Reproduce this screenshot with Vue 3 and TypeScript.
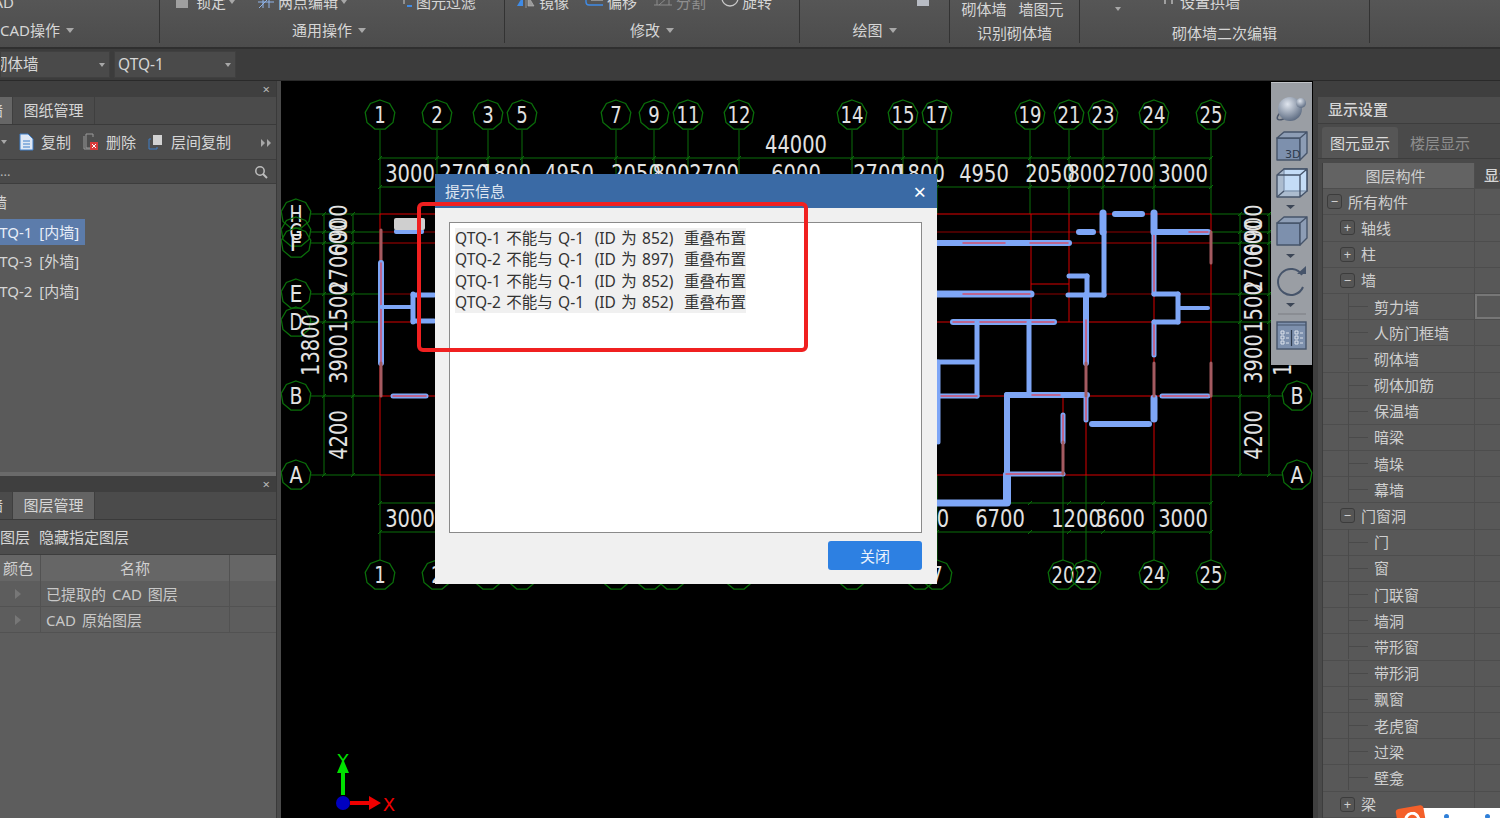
<script setup lang="ts">
interface Wall { p: number[]; w: number; core?: boolean; kind?: string }

const columns: [string, number][] = [
  ['1', 380], ['2', 437], ['3', 488], ['5', 522], ['7', 616], ['9', 654], ['11', 688], ['12', 739],
  ['14', 852], ['15', 903], ['17', 937], ['19', 1030], ['21', 1069], ['23', 1103], ['24', 1154], ['25', 1211],
]
const bottomColumns: [string, number][] = [
  ['1', 380], ['2', 437], ['3', 488], ['5', 522], ['7', 616], ['9', 650], ['11', 672], ['12', 739],
  ['14', 852], ['15', 920], ['7', 937], ['20', 1063], ['22', 1086], ['24', 1154], ['25', 1211],
]
const rows: [string, number, string][] = [
  ['H', 214, '#e00000'], ['G', 232, '#8e0000'], ['F', 243, '#b00000'], ['E', 294, '#8e0000'],
  ['D', 322, '#d80000'], ['B', 396, '#e00000'], ['A', 475, '#d80000'],
]
const topDims: [string, number][] = [
  ['3000', 410], ['2700', 464], ['1800', 506], ['4950', 569], ['2050', 636], ['800', 671], ['2700', 714],
  ['6000', 796], ['2700', 878], ['1800', 920], ['4950', 984], ['2050', 1050], ['800', 1086], ['2700', 1129], ['3000', 1183],
]
const bottomDims: [string, number][] = [
  ['3000', 410], ['6700', 1000], ['1200', 1076], ['3600', 1120], ['3000', 1183], ['0', 943],
]
const sideDims: [string, number][] = [
  ['900', 223], ['600', 238], ['2700', 268], ['1500', 308], ['3900', 359], ['4200', 435],
]
const redLines: number[][] = [
  [380, 214, 380, 475], [1031, 214, 1031, 322], [1069, 214, 1069, 322], [1103, 214, 1103, 294],
  [1086, 322, 1086, 475], [1154, 214, 1154, 475], [1211, 214, 1211, 475], [1063, 396, 1063, 475],
  [1031, 284, 1069, 284],
]
const walls: Wall[] = [
  { p: [937, 243, 1069, 243], w: 6 }, { p: [963, 243, 1005, 243], w: 1.500, kind: 'core' }, { p: [1030, 243, 1068, 243], w: 1.500, kind: 'core' },
  { p: [937, 294, 1031, 294], w: 7 }, { p: [963, 294, 1030, 294], w: 1.500, kind: 'core' },
  { p: [1103, 213, 1103, 232], w: 7 }, { p: [1104, 232, 1104, 295], w: 5 }, { p: [1115, 214, 1142, 214], w: 6 },
  { p: [1079, 232, 1093, 232], w: 6 }, { p: [1154, 213, 1154, 232], w: 7 }, { p: [1154, 232, 1154, 294], w: 5, core: true },
  { p: [1154, 232, 1208, 232], w: 6 }, { p: [1189, 232, 1208, 232], w: 1.500, kind: 'core' },
  { p: [1211, 232, 1211, 263], w: 3, kind: 'old' }, { p: [1069, 276, 1087, 276], w: 5 }, { p: [1087, 276, 1087, 295], w: 5 },
  { p: [1068, 295, 1104, 295], w: 5 }, { p: [1086, 295, 1086, 363], w: 6 }, { p: [1086, 320, 1086, 363], w: 1.500, kind: 'core' },
  { p: [953, 322, 1054, 322], w: 6, core: true },
  { p: [977, 322, 977, 396], w: 5 }, { p: [1029, 322, 1029, 395], w: 5 }, { p: [937, 362, 975, 362], w: 5 },
  { p: [937, 396, 977, 396], w: 5, core: true }, { p: [938, 362, 938, 442], w: 5 }, { p: [1007, 395, 1087, 395], w: 6 },
  { p: [1032, 395, 1060, 395], w: 1.500, kind: 'core' }, { p: [1007, 395, 1007, 475], w: 6 }, { p: [1007, 475, 1007, 502], w: 8 },
  { p: [937, 503, 1007, 503], w: 7 }, { p: [1006, 474, 1063, 474], w: 5, core: true }, { p: [1063, 415, 1063, 442], w: 5, core: true },
  { p: [1063, 442, 1063, 474], w: 3, kind: 'old' }, { p: [1086, 398, 1086, 420], w: 5, core: true }, { p: [1086, 363, 1086, 396], w: 3, kind: 'old' },
  { p: [1092, 424, 1149, 424], w: 6 }, { p: [1154, 398, 1154, 419], w: 7 }, { p: [1154, 363, 1154, 396], w: 3, kind: 'old' },
  { p: [1154, 322, 1154, 355], w: 5, core: true }, { p: [1154, 294, 1178, 294], w: 5 }, { p: [1178, 294, 1178, 322], w: 5 },
  { p: [1154, 322, 1178, 322], w: 5 }, { p: [1178, 308, 1208, 308], w: 4 }, { p: [1162, 396, 1208, 396], w: 5, core: true },
  { p: [1211, 363, 1211, 396], w: 3, kind: 'old' }, { p: [381, 230, 381, 263], w: 3, kind: 'old' }, { p: [381, 263, 381, 363], w: 6, core: true },
  { p: [381, 363, 381, 396], w: 3, kind: 'old' }, { p: [381, 307, 413, 307], w: 4 }, { p: [413, 294, 413, 322], w: 5 },
  { p: [413, 295, 434, 295], w: 5 }, { p: [413, 321, 434, 321], w: 5 }, { p: [393, 396, 426, 396], w: 5, core: true },
]

function bubble(cx: number, cy: number): string {
  const pts: string[] = []
  for (let i = 0; i < 9; i++) {
    const a = -Math.PI / 2 + (i * 2 * Math.PI) / 9
    pts.push(`${(cx + 15 * Math.cos(a)).toFixed(1)},${(cy + 15 * Math.sin(a)).toFixed(1)}`)
  }
  return pts.join(' ')
}
const numWidth = (s: string) => s.length * 12.4

const treeRows: { text: string; level: number; icon?: string; check?: boolean }[] = [
  { text: '所有构件', level: 0, icon: '−' }, { text: '轴线', level: 1, icon: '+' }, { text: '柱', level: 1, icon: '+' },
  { text: '墙', level: 1, icon: '−' }, { text: '剪力墙', level: 2, check: true }, { text: '人防门框墙', level: 2 },
  { text: '砌体墙', level: 2 }, { text: '砌体加筋', level: 2 }, { text: '保温墙', level: 2 }, { text: '暗梁', level: 2 },
  { text: '墙垛', level: 2 }, { text: '幕墙', level: 2 }, { text: '门窗洞', level: 1, icon: '−' }, { text: '门', level: 2 },
  { text: '窗', level: 2 }, { text: '门联窗', level: 2 }, { text: '墙洞', level: 2 }, { text: '带形窗', level: 2 },
  { text: '带形洞', level: 2 }, { text: '飘窗', level: 2 }, { text: '老虎窗', level: 2 }, { text: '过梁', level: 2 },
  { text: '壁龛', level: 2 }, { text: '梁', level: 1, icon: '+' },
]
const messages = [
  'QTQ-1 不能与 Q-1  (ID 为 852)  重叠布置',
  'QTQ-2 不能与 Q-1  (ID 为 897)  重叠布置',
  'QTQ-1 不能与 Q-1  (ID 为 852)  重叠布置',
  'QTQ-2 不能与 Q-1  (ID 为 852)  重叠布置',
]
</script>

<template>
  <div class="app">
    <header class="ribbon">
      <section class="group g-cad">
        <div class="tools"><span class="cut-left">CAD</span></div>
        <div class="label">CAD操作 <i class="caret"></i></div>
      </section>
      <section class="group g-common">
        <div class="tools">
          <span class="t1"><b class="ico-box"></b>锁定 <i class="caret small"></i></span>
          <span class="t2"><svg width="18" height="12" viewBox="0 0 18 12"><path d="M1 6h16M6 0v12M12 0v12M2 12 14 0" stroke="#8fb4ea" fill="none"/></svg>两点编辑 <i class="caret small"></i></span>
          <span class="t3"><svg width="12" height="12" viewBox="0 0 12 12"><path d="M3 0v8" stroke="#ccc"/><path d="M6 9h5v2H6z" fill="#3f8be6"/></svg>图元过滤</span>
        </div>
        <div class="label shift-common">通用操作 <i class="caret"></i></div>
      </section>
      <section class="group g-modify">
        <div class="tools">
          <span class="t4"><svg width="20" height="12" viewBox="0 0 20 12"><path d="M1 10 7 0v10z" fill="#3f8be6"/><path d="M10 0v12M12 0l6 10h-6z" fill="#999" stroke="#bbb" stroke-width=".6"/></svg>镜像</span>
          <span class="t5"><svg width="20" height="12" viewBox="0 0 20 12"><path d="M2 0v6q0 3 3 3h14" fill="none" stroke="#3f8be6" stroke-width="1.4"/><path d="M7 4h12" stroke="#ccc"/></svg>偏移</span>
          <span class="t6 dim"><svg width="20" height="12" viewBox="0 0 20 12"><path d="M1 9h18M4 9V3h12v6M6 9l9-8" fill="none" stroke="#8c8c8c"/></svg>分割</span>
          <span class="t7"><svg width="18" height="12" viewBox="0 0 18 12"><circle cx="9" cy="2" r="8" fill="none" stroke="#c8c8c8" stroke-width="1.3"/></svg>旋转</span>
        </div>
        <div class="label">修改 <i class="caret"></i></div>
      </section>
      <section class="group g-draw">
        <div class="tools"><span class="draw-ico"></span></div>
        <div class="label">绘图 <i class="caret"></i></div>
      </section>
      <section class="group g-identify">
        <div class="tools high"><span>砌体墙</span><span>墙图元</span></div>
        <div class="label low">识别砌体墙</div>
      </section>
      <section class="group g-edit">
        <div class="tools">
          <i class="caret small edit-caret"></i>
          <span class="t8"><svg width="14" height="12" viewBox="0 0 14 12"><path d="M2 0v8M9 0v8" stroke="#b8b8b8" stroke-width="1.5"/></svg>设置拱墙</span>
        </div>
        <div class="label low">砌体墙二次编辑</div>
      </section>
      <section class="group g-rest"></section>
    </header>

    <div class="selectbar">
      <div class="combo c1"><span class="cut-combo">砌体墙</span><i class="caret small"></i></div>
      <div class="combo c2"><span>QTQ-1</span><i class="caret small"></i></div>
    </div>

    <main class="workspace">
      <aside class="left-col">
        <div class="pane pane-top">
          <div class="strip"><span class="close">×</span></div>
          <div class="tabs">
            <span class="tab stub">墙</span>
            <span class="tab">图纸管理</span>
          </div>
          <div class="actions">
            <i class="caret small first"></i>
            <span class="act a1">
              <svg width="15" height="18" viewBox="0 0 15 18"><path d="M1 1h8l5 5v11H1z" fill="#dfe8f5" stroke="#3f7fc8"/><path d="M4 8h7M4 11h7M4 14h7" stroke="#3f7fc8"/></svg>复制
            </span>
            <span class="act a2">
              <svg width="16" height="18" viewBox="0 0 16 18"><path d="M3 1h7v3M3 1v14h4" fill="none" stroke="#9a9a9a"/><path d="M1 3v13h6" fill="none" stroke="#9a9a9a"/><rect x="7" y="9" width="8" height="8" fill="#d93a3a"/><path d="m9 11 4 4m0-4-4 4" stroke="#fff"/></svg>删除
            </span>
            <span class="act a3">
              <svg width="15" height="16" viewBox="0 0 15 16"><rect x="5" y="1" width="9" height="10" fill="#d2d2d2"/><path d="M3 5H1v10h8v-2" fill="none" stroke="#3f7fc8"/></svg>层间复制
            </span>
            <svg class="more" width="10" height="8" viewBox="0 0 10 8"><path d="M0 0l4 4-4 4zM6 0l4 4-4 4z" fill="#a8a8a8"/></svg>
          </div>
          <div class="search">
            <span>...</span>
            <svg width="14" height="14" viewBox="0 0 14 14"><circle cx="6" cy="6" r="4.2" fill="none" stroke="#bdbdbd" stroke-width="1.5"/><path d="m9 9 4 4" stroke="#bdbdbd" stroke-width="2"/></svg>
          </div>
          <ul class="list">
            <li class="head">墙</li>
            <li class="selected">QTQ-1 [内墙]</li>
            <li>QTQ-3 [外墙]</li>
            <li>QTQ-2 [内墙]</li>
          </ul>
        </div>
        <div class="hsplit"></div>
        <div class="pane pane-bottom">
          <div class="strip low-strip"><span class="close">×</span></div>
          <div class="tabs">
            <span class="tab stub dark">墙</span>
            <span class="tab on">图层管理</span>
          </div>
          <div class="actions lay-actions"><span class="lay1">图层</span><span>隐藏指定图层</span></div>
          <div class="grid-row grid-head"><span class="c-color">颜色</span><span class="c-name center">名称</span></div>
          <div class="grid-row"><span class="c-color"><i class="tri"></i></span><span class="c-name">已提取的 CAD 图层</span></div>
          <div class="grid-row"><span class="c-color"><i class="tri"></i></span><span class="c-name">CAD 原始图层</span></div>
        </div>
      </aside>
      <div class="vsplit"></div>

      <div class="canvas">
        <svg class="drawing" width="1032" height="737" viewBox="281 81 1032 737">
          <g stroke="#0a6e0a" fill="none">
            <line v-for="c in columns" :key="'t' + c[1]" :x1="c[1]" y1="130" :x2="c[1]" y2="214" />
            <line v-for="c in bottomColumns" :key="'b' + c[1]" :x1="c[1]" y1="475" :x2="c[1]" y2="560" />
            <line x1="380" y1="158" x2="1212" y2="158" />
            <line x1="380" y1="187" x2="1212" y2="187" />
            <line x1="380" y1="503" x2="1212" y2="503" />
            <line x1="380" y1="532" x2="1212" y2="532" />
            <template v-for="r in rows" :key="'g' + r[0]">
              <line x1="311" :y1="r[1]" x2="380" :y2="r[1]" />
              <line x1="1211" :y1="r[1]" x2="1283" :y2="r[1]" />
            </template>
            <line x1="324" y1="214" x2="324" y2="475" />
            <line x1="353" y1="214" x2="353" y2="475" />
            <line x1="1240" y1="214" x2="1240" y2="475" />
            <line x1="1269" y1="214" x2="1269" y2="475" />
            <template v-for="c in columns" :key="'k' + c[1]">
              <path :d="`M${c[1] - 2} 189l4-4M${c[1] - 2} 160l4-4M${c[1] - 2} 505l4-4M${c[1] - 2} 534l4-4`" />
            </template>
            <template v-for="r in rows" :key="'m' + r[0]">
              <path :d="`M322 ${r[1] + 2}l4-4M351 ${r[1] + 2}l4-4M1238 ${r[1] + 2}l4-4M1267 ${r[1] + 2}l4-4`" />
            </template>
          </g>

          <g fill="none">
            <line v-for="r in rows" :key="'r' + r[0]" x1="380" :y1="r[1]" x2="1211" :y2="r[1]" :stroke="r[2]" />
            <line v-for="(l, i) in redLines" :key="'v' + i" :x1="l[0]" :y1="l[1]" :x2="l[2]" :y2="l[3]" stroke="#d80000" />
          </g>

          <g fill="none" stroke-linecap="round">
            <template v-for="(w, i) in walls" :key="'w' + i">
              <line :x1="w.p[0]" :y1="w.p[1]" :x2="w.p[2]" :y2="w.p[3]" :stroke-width="w.w"
                :stroke="w.kind === 'old' ? '#a45a60' : w.kind === 'core' ? '#d2506e' : '#7ea6f6'" />
              <line v-if="w.core" :x1="w.p[0]" :y1="w.p[1]" :x2="w.p[2]" :y2="w.p[3]" stroke="#d2506e" stroke-width="1.500" />
            </template>
          </g>
          <rect x="394" y="229" width="30" height="5" rx="2" fill="#7ea6f6" />
          <rect x="394" y="218" width="31" height="12" rx="2" fill="#cfcfcf" />

          <g class="bubble" v-for="c in columns" :key="'bt' + c[1]">
            <polygon :points="bubble(c[1], 115)" />
            <text :x="c[1]" y="115" :textLength="c[0].length * 11.5" lengthAdjust="spacingAndGlyphs">{{ c[0] }}</text>
          </g>
          <g class="bubble" v-for="c in bottomColumns" :key="'bb' + c[1]">
            <polygon :points="bubble(c[1], 575)" />
            <text :x="c[1]" y="575" :textLength="c[0].length * 11.5" lengthAdjust="spacingAndGlyphs">{{ c[0] }}</text>
          </g>
          <g class="bubble" v-for="r in rows" :key="'bl' + r[0]">
            <polygon :points="bubble(296, r[1])" />
            <text x="296" :y="r[1]" textLength="13" lengthAdjust="spacingAndGlyphs">{{ r[0] }}</text>
          </g>
          <g class="bubble" v-for="r in rows.slice(5)" :key="'br' + r[0]">
            <polygon :points="bubble(1297, r[1])" />
            <text x="1297" :y="r[1]" textLength="13" lengthAdjust="spacingAndGlyphs">{{ r[0] }}</text>
          </g>

          <g class="dim">
            <text x="796" y="145" :textLength="numWidth('44000')" lengthAdjust="spacingAndGlyphs">44000</text>
            <text v-for="(d, i) in topDims" :key="'d' + i" :x="d[1]" y="174" :textLength="numWidth(d[0])" lengthAdjust="spacingAndGlyphs">{{ d[0] }}</text>
            <text v-for="(d, i) in bottomDims" :key="'e' + i" :x="d[1]" y="519" :textLength="numWidth(d[0])" lengthAdjust="spacingAndGlyphs">{{ d[0] }}</text>
            <template v-for="x in [339, 1254]" :key="'s' + x">
              <text v-for="d in sideDims" :key="d[0]" :x="x" :y="d[1]" :transform="`rotate(-90 ${x} ${d[1]})`" :textLength="numWidth(d[0])" lengthAdjust="spacingAndGlyphs">{{ d[0] }}</text>
            </template>
            <text x="311" y="345" transform="rotate(-90 311 345)" :textLength="numWidth('13800')" lengthAdjust="spacingAndGlyphs">13800</text>
            <text x="1283" y="345" transform="rotate(-90 1283 345)" :textLength="numWidth('13800')" lengthAdjust="spacingAndGlyphs">13800</text>
          </g>

          <path d="M341 795v-22h-4l6-14 6 14h-4v22z" fill="#00e000" />
          <path d="M350 801h19v-5l12 7-12 7v-5h-19z" fill="#f00000" />
          <circle cx="343" cy="803" r="7" fill="#0000c0" />
          <text class="axis" x="343" y="760" fill="#00e000">Y</text>
          <text class="axis" x="389" y="804" fill="#f00000">X</text>
        </svg>

        <div class="viewbar">
          <svg width="41" height="283" viewBox="0 0 41 283">
            <defs>
              <radialGradient id="ball" cx="40%" cy="30%" r="75%"><stop offset="0" stop-color="#dfe5ee" /><stop offset="1" stop-color="#56657c" /></radialGradient>
            </defs>
            <ellipse cx="18" cy="29" rx="14" ry="4.5" transform="rotate(-35 18 29)" fill="none" stroke="#4a5568" stroke-width="1.5" />
            <circle cx="19" cy="27" r="12" fill="url(#ball)" />
            <circle cx="30" cy="21" r="5" fill="url(#ball)" />

            <g stroke="#46546a" stroke-width="1.4" stroke-linejoin="round">
              <path d="M6 56h23v22H6z" fill="#7d90ad" />
              <path d="M6 56l7-6h23l-7 6zM29 56l7-6v21l-7 7z" fill="#8d9db5" />
            </g>
            <text class="cube-label" x="14" y="76">3D</text>

            <g stroke="#46546a" stroke-width="1.4" stroke-linejoin="round">
              <path d="M13 87h23v22H13z" fill="#cfe4fb" />
              <path d="M6 93l7-6h23l-7 6zM29 93l7-6v22l-7 6zM6 93h23v22H6z" fill="#bcd6f2" fill-opacity=".55" />
              <path d="M6 115l7-6" fill="none" />
            </g>
            <path d="M15 123h9l-4.500 4z" fill="#3c4656" />

            <g stroke="#46546a" stroke-width="1.4" stroke-linejoin="round">
              <path d="M6 141h23v22H6z" fill="#7d90ad" />
              <path d="M6 141l7-6h23l-7 6zM29 141l7-6v21l-7 7z" fill="#8d9db5" />
            </g>
            <path d="M15 172h9l-4.500 4z" fill="#3c4656" />

            <path d="M31 193a13 13 0 1 0 1 12" fill="none" stroke="#46546a" stroke-width="2" />
            <path d="M26 192h9v-8z" fill="#46546a" />
            <path d="M15 221h9l-4.500 4z" fill="#3c4656" />

            <path d="M7 232h28" stroke="#7a7d82" />
            <rect x="6" y="240" width="29" height="27" fill="#7d90ad" stroke="#46546a" stroke-width="1.4" />
            <path d="M6 243h29" stroke="#46546a" />
            <path d="M20.500 248v16" stroke="#2e3a4c" stroke-width="1.2" />
            <path d="M10 249h3v3h-3zM10 254h3v3h-3zM10 259h3v3h-3zM24 249h3v3h-3zM24 254h3v3h-3zM24 259h3v3h-3zM15 251h3M15 256h3M15 261h3M29 251h3M29 256h3M29 261h3" fill="none" stroke="#e6ebf2" stroke-width=".9" />
          </svg>
        </div>
      </div>

      <aside class="right">
        <div class="strip"></div>
        <div class="r-title">显示设置</div>
        <div class="r-tabs"><span class="r-tab on">图元显示</span><span class="r-tab">楼层显示</span></div>
        <div class="tree">
          <div class="t-row t-head"><span class="t-name">图层构件</span><span class="t-show">显示</span></div>
          <div v-for="(r, i) in treeRows" :key="i" class="t-row">
            <span class="t-name" :class="'lv' + r.level">
              <b v-if="r.icon" class="expander">{{ r.icon }}</b>
              <i v-else class="dash"></i>{{ r.text }}
            </span>
            <span class="t-cell"><b v-if="r.check" class="check"></b></span>
          </div>
        </div>
        <div class="ime">
          <span class="ime-logo"></span>
          <span class="ime-dot d1"></span>
          <span class="ime-dot d2"></span>
        </div>
      </aside>
    </main>

    <div class="dialog">
      <div class="d-title"><span>提示信息</span><span class="d-close">×</span></div>
      <div class="d-body">
        <div class="d-text">
          <div v-for="(m, i) in messages" :key="i" class="d-line"><span>{{ m }}</span></div>
        </div>
        <div class="d-foot"><button class="d-btn">关闭</button></div>
      </div>
    </div>
    <div class="callout"></div>
  </div>
</template>

<style>
html, body { margin: 0; background: #3c3c3c; }
</style>

<style scoped>
.app {
  position: relative;
  width: 1500px;
  height: 818px;
  overflow: hidden;
  display: flex;
  flex-direction: column;
  background: #3c3c3c;
  color: #d6d6d6;
  font: 15px/1.2 "Noto Sans", "Noto Sans CJK SC", sans-serif;
}
i, b { display: inline-block; font-style: normal; font-weight: normal; }

.ribbon {
  height: 47px;
  flex: none;
  display: flex;
  align-items: flex-start;
  background: linear-gradient(#565656, #4c4c4c);
  border-bottom: 2px solid #2f2f2f;
}
.group {
  height: 43px;
  display: flex;
  flex-direction: column;
  align-items: center;
  border-right: 1px solid #333;
  box-sizing: border-box;
  flex: none;
}
.g-cad { width: 160px; align-items: flex-start; }
.g-common { width: 345px; }
.g-modify { width: 295px; }
.g-draw { width: 150px; }
.g-identify { width: 130px; }
.g-edit { width: 290px; }
.g-rest { flex: 1; border: 0; }
.tools {
  height: 22px;
  width: 100%;
  margin-top: -9px;
  display: flex;
  align-items: center;
  white-space: nowrap;
  flex: none;
  position: relative;
}
.tools.high { margin-top: 0; height: 17px; gap: 12px; justify-content: center; padding-right: 4px; box-sizing: border-box; }
.tools span { display: inline-flex; align-items: center; gap: 3px; }
.label { height: 20px; margin-top: 7px; display: flex; align-items: center; gap: 6px; white-space: nowrap; }
.shift-common { margin-right: 6px; }
.g-identify .label.low { margin-top: 6px; }
.g-edit .label.low { margin-top: 10px; }
.caret {
  width: 0;
  height: 0;
  border-left: 4.500px solid transparent;
  border-right: 4.500px solid transparent;
  border-top: 5px solid #a8a8a8;
}
.caret.small { border-left-width: 3.500px; border-right-width: 3.500px; border-top-width: 4px; }
.cut-left { margin-left: -16px; }
.t1 { margin-left: 16px; }
.t2 { margin-left: 22px; }
.t3 { margin-left: 54px; }
.t4 { margin-left: 11px; }
.t5 { margin-left: 15px; }
.t6 { margin-left: 16px; }
.t7 { margin-left: 15px; }
.t8 { margin-left: 42px; }
.edit-caret { margin-left: 35px; margin-top: 14px; }
.dim { color: #8f8f8f; }
.ico-box { width: 12px; height: 11px; background: #a0a0a0; margin-right: 5px; }
.draw-ico { width: 12px; height: 8px; background: #b8bcc4; margin-left: 117px; }

.selectbar {
  height: 31px;
  flex: none;
  display: flex;
  align-items: center;
  gap: 4px;
  background: #3c3c3c;
  border-bottom: 1px solid #2a2a2a;
}
.combo {
  height: 27px;
  display: flex;
  align-items: center;
  justify-content: space-between;
  background: #4a4a4a;
  border: 1px solid #404040;
  box-sizing: border-box;
  padding: 0 4px 0 3px;
  font-size: 15.500px;
}
.c1 { width: 110px; overflow: hidden; }
.c2 { width: 122px; }
.cut-combo { margin-left: -12px; }

.workspace { flex: 1; display: flex; min-height: 0; }
.left-col { width: 276px; flex: none; display: flex; flex-direction: column; }
.vsplit { width: 5px; flex: none; background: #4a4a4a; border-left: 1px solid #3a3a3a; box-sizing: border-box; }
.pane { display: flex; flex-direction: column; background: #5a5a5a; }
.pane-top { height: 391px; }
.pane-bottom { flex: 1; background: #5d5d5d; }
.hsplit { height: 4px; background: #6a6a6a; }
.strip {
  height: 16px;
  flex: none;
  background: #3f3f3f;
  display: flex;
  justify-content: flex-end;
  align-items: center;
}
.close { margin-right: 6px; color: #b8b8b8; font-size: 13px; line-height: 16px; }
.tabs {
  height: 27px;
  flex: none;
  display: flex;
  background: #4b4b4b;
  border-bottom: 1px solid #3a3a3a;
}
.tab {
  width: 82px;
  display: flex;
  align-items: center;
  justify-content: center;
  border-right: 1px solid #3f3f3f;
  box-sizing: border-box;
  background: #4b4b4b;
  padding-bottom: 2px;
}
.tab.on { background: #636363; }
.tab.stub { width: 13px; justify-content: flex-end; background: #666; overflow: hidden; padding-right: 9px; }
.tab.stub.dark { background: #4b4b4b; }
.actions {
  height: 35px;
  flex: none;
  display: flex;
  align-items: center;
  background: #4d4d4d;
  border-bottom: 1px solid #3d3d3d;
  box-sizing: border-box;
  position: relative;
}
.first { margin-left: 1px; }
.act { display: inline-flex; align-items: center; gap: 7px; }
.a1 { margin-left: 12px; }
.a2 { margin-left: 12px; gap: 7px; }
.a3 { margin-left: 12px; gap: 8px; }
.more { position: absolute; right: 5px; top: 14px; }
.search {
  height: 24px;
  flex: none;
  display: flex;
  justify-content: space-between;
  align-items: center;
  background: #4a4a4a;
  border-bottom: 1px solid #3d3d3d;
  padding: 0 8px 0 0;
  box-sizing: border-box;
  font-size: 13px;
  color: #b5b5b5;
}
.list { list-style: none; margin: 0; padding: 5px 0 0; }
.list li {
  height: 30px;
  width: 96px;
  box-sizing: border-box;
  display: flex;
  align-items: center;
  white-space: pre;
  overflow: hidden;
  text-indent: -12px;
  word-spacing: 3px;
}
.list .head { height: 26px; text-indent: -8px; }
.list .selected { height: 26px; margin: 4px 0 0; width: 85px; background: #5c7cab; color: #e8eef8; }
.list .selected + li { margin-top: 1px; }

.low-strip { background: #3f3f3f; }
.lay-actions { gap: 9px; }
.grid-row { height: 26px; display: flex; width: 276px; flex: none; border-bottom: 1px solid #525252; box-sizing: border-box; color: #c8c8c8; word-spacing: 2px; }
.grid-head { background: #666; color: #d0d0d0; border-bottom: 0; }
.grid-row span { display: flex; align-items: center; border-right: 1px solid #525252; box-sizing: border-box; }
.c-color { width: 41px; justify-content: flex-end; padding-right: 7px; }
.grid-row:not(.grid-head) .c-color { padding-right: 19px; }
.c-name { width: 189px; padding-left: 5px; }
.center { justify-content: center; padding-left: 0; }
.tri { width: 0; height: 0; border-left: 6px solid #777; border-top: 5px solid transparent; border-bottom: 5px solid transparent; }

.canvas { position: relative; width: 1032px; flex: none; background: #000; overflow: hidden; }
.drawing { display: block; }
.bubble polygon { fill: none; stroke: #0a6e0a; stroke-width: 1.3; }
.bubble text, .dim text {
  font-family: "DejaVu Sans", sans-serif;
  fill: #e2e2e2;
  text-anchor: middle;
  dominant-baseline: central;
}
.bubble text { font-size: 23px; }
.dim text { font-size: 24px; }
.axis { font: 18px "DejaVu Sans", sans-serif; text-anchor: middle; dominant-baseline: central; }
.cube-label { font: 11px "DejaVu Sans", sans-serif; fill: #2e3a4c; }
.viewbar {
  position: absolute;
  left: 990px;
  top: 1px;
  width: 41px;
  height: 283px;
  background: #9a9ea4;
  border-top: 1px solid #c0c3c7;
  box-sizing: border-box;
}
.viewbar svg { display: block; margin-top: -1px; }

.right { position: relative; flex: 1; background: #4a4a4a; border-left: 5px solid #3f3f3f; display: flex; flex-direction: column; min-width: 0; overflow: hidden; }
.r-title { height: 27px; flex: none; display: flex; align-items: center; padding: 0 0 3px 10px; background: #4d4d4d; border-bottom: 1px solid #3d3d3d; box-sizing: border-box; font-weight: 500; }
.r-tabs { height: 35px; flex: none; display: flex; align-items: flex-end; padding-left: 4px; background: #4a4a4a; border-bottom: 1px solid #3d3d3d; box-sizing: border-box; }
.r-tab { width: 76px; height: 31px; display: flex; align-items: center; justify-content: center; color: #8e8e8e; border-radius: 3px 3px 0 0; }
.r-tab.on { background: #565656; color: #dcdcdc; margin-right: 4px; }
.tree { margin: 4px 0 0 4px; background: #585858; border-left: 1px solid #3d3d3d; flex: 1; }
.t-row { height: 26.200px; display: flex; border-bottom: 1px solid #4d4d4d; box-sizing: border-box; white-space: nowrap; }
.t-head { background: #636363; }
.t-name { width: 152px; flex: none; display: flex; align-items: center; position: relative; border-right: 1px solid #4d4d4d; box-sizing: border-box; color: #cfcfcf; }
.t-head .t-name { justify-content: center; padding-right: 6px; }
.t-show { flex: 1; background: #4a4a4a; padding: 3px 0 0 9px; font-weight: 500; }
.t-cell { flex: 1; }
.lv0 { padding-left: 25px; }
.lv1 { padding-left: 38px; }
.lv2 { padding-left: 51px; }
.expander {
  position: absolute;
  top: 5px;
  width: 15px;
  height: 15px;
  line-height: 13px;
  text-align: center;
  font-size: 13px;
  background: #555;
  border: 1px solid #3c3c3c;
  border-radius: 3px;
  box-sizing: border-box;
}
.lv0 .expander { left: 4px; }
.lv1 .expander { left: 17px; }
.dash { position: absolute; left: 25px; top: 12px; width: 20px; height: 1px; background: #4a4a4a; }
.dash::before { content: ""; position: absolute; left: 0; top: -13px; width: 1px; height: 26px; background: #4a4a4a; }
.check { display: block; height: 25px; border: 2px solid #777; border-right: 0; box-sizing: border-box; }
.ime { position: absolute; left: 75px; bottom: 0; width: 110px; height: 12px; }
.ime::before { content: ""; position: absolute; left: 30px; right: 0; top: 2px; bottom: 0; background: #fff; }
.ime-logo { position: absolute; left: 4px; top: 1px; width: 28px; height: 22px; background: #f4602a; border-radius: 3px; transform: rotate(-10deg); }
.ime-logo::after { content: ""; position: absolute; left: 7px; top: 5px; width: 16px; height: 14px; border: 3px solid #fff; border-radius: 8px 8px 0 0; box-sizing: border-box; border-bottom: 0; }
.ime-dot { position: absolute; top: 8px; width: 5px; height: 5px; border-radius: 50%; background: #2f7fd8; }
.d1 { left: 51px; }
.d2 { left: 92px; }

.dialog {
  position: absolute;
  left: 435px;
  top: 174px;
  width: 502px;
  height: 410px;
  background: #f0f0f0;
  display: flex;
  flex-direction: column;
  color: #333;
}
.d-title {
  height: 34px;
  flex: none;
  display: flex;
  align-items: center;
  justify-content: space-between;
  padding: 0 11px 0 10px;
  background: #3a6aa5;
  color: #dfe6f0;
}
.d-close { color: #fff; font-size: 22px; line-height: 22px; }
.d-body { flex: 1; display: flex; flex-direction: column; padding: 14px 15px 15px 14px; }
.d-text {
  height: 311px;
  flex: none;
  background: #fff;
  border: 1px solid #8a8a8a;
  padding: 5px;
  box-sizing: border-box;
}
.d-line { height: 21.300px; line-height: 21.300px; white-space: pre; font-size: 15.500px; word-spacing: 1.300px; }
.d-line span { background: #f0f0f0; display: inline-block; }
.d-foot { display: flex; justify-content: flex-end; margin-top: 8px; }
.d-btn {
  width: 94px;
  height: 29px;
  border: 0;
  border-radius: 3px;
  background: #2d80e2;
  color: #eaf2fc;
  font: inherit;
  padding: 0;
}
.callout {
  position: absolute;
  left: 417px;
  top: 202px;
  width: 391px;
  height: 150px;
  border: 4px solid #f02020;
  border-radius: 6px;
  box-sizing: border-box;
}
</style>
